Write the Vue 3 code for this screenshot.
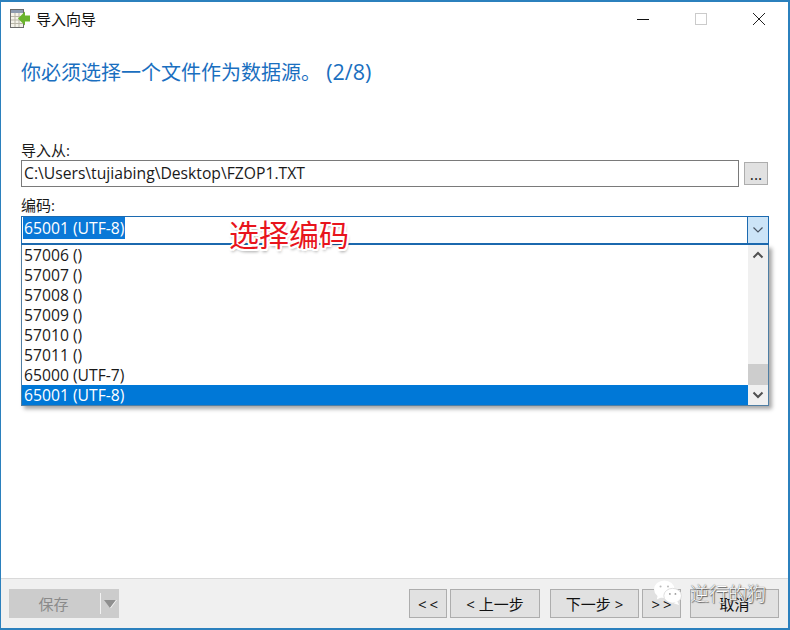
<script setup>
const items = ['57006 ()', '57007 ()', '57008 ()', '57009 ()', '57010 ()', '57011 ()', '65000 (UTF-7)', '65001 (UTF-8)']
</script>

<template>
  <div class="win">
    <header class="titlebar">
      <svg class="appicon" width="21" height="20" viewBox="0 0 21 20">
        <rect x="0.5" y="0.5" width="13" height="18" fill="#f4f2ea" stroke="#6b6b6b" />
        <rect x="1" y="1" width="12" height="3" fill="#8d9bb0" />
        <path d="M1 7.5h12M1 11h12M1 14.5h12M5 4v14M9 4v14" stroke="#b9b6a8" fill="none" />
        <path d="M20 6.5h-5V2.5L8 9.5l7 7v-4h5z" fill="#6ab42d" />
      </svg>
      <span class="wintitle">导入向导</span>
      <div class="controls">
        <svg class="ctl" width="14" height="14" viewBox="0 0 14 14"><path d="M1 7.500h12" stroke="#111" /></svg>
        <svg class="ctl" width="14" height="14" viewBox="0 0 14 14"><rect x="1.5" y="1.5" width="11" height="11" fill="none" stroke="#cbcbcb" /></svg>
        <svg class="ctl" width="14" height="14" viewBox="0 0 14 14"><path d="M1 1l12 12M13 1L1 13" stroke="#222" fill="none" /></svg>
      </div>
    </header>

    <main class="body">
      <h1 class="heading">你必须选择一个文件作为数据源。 <span class="step">(2/8)</span></h1>

      <label class="label first">导入从:</label>
      <div class="filerow">
        <div class="input">C:\Users\tujiabing\Desktop\FZOP1.TXT</div>
        <button class="browse">...</button>
      </div>

      <label class="label second">编码:</label>
      <div class="combo">
        <div class="combotext"><span class="sel">65001 (UTF-8)</span></div>
        <div class="comboarrow">
          <svg width="12" height="8" viewBox="0 0 12 8"><path d="M1.5 1.5L6 6l4.500-4.500" fill="none" stroke="#4a5563" stroke-width="1.200" /></svg>
        </div>
        <div class="note">选择编码</div>
        <div class="dropdown">
          <ul class="list">
            <li v-for="(it, i) in items" :key="it" :class="{ active: i === items.length - 1 }">{{ it }}</li>
          </ul>
          <div class="scroll">
            <div class="sbtn">
              <svg width="12" height="8" viewBox="0 0 12 8"><path d="M1.500 6.500L6 2l4.500 4.500" fill="none" stroke="#505050" stroke-width="2" /></svg>
            </div>
            <div class="track"><div class="thumb"></div></div>
            <div class="sbtn">
              <svg width="12" height="8" viewBox="0 0 12 8"><path d="M1.500 1.500L6 6l4.500-4.500" fill="none" stroke="#505050" stroke-width="2" /></svg>
            </div>
          </div>
        </div>
      </div>
    </main>

    <footer class="footer">
      <div class="savebtn">
        <span class="savetext">保存</span>
        <span class="savearrow"><svg width="14" height="8" viewBox="0 0 14 8"><path d="M1 0h12L7 8z" fill="#8f8f8f" /><path d="M13 0h1L8 8H7z" fill="#f4f4f4" /></svg></span>
      </div>
      <div class="nav">
        <button class="btn w38 spaced">&lt;&lt;</button>
        <button class="btn w90 gap3">&lt; 上一步</button>
        <button class="btn w89 gap10">下一步 &gt;</button>
        <button class="btn w39 gap3 spaced">&gt;&gt;</button>
        <button class="btn w89 gap9">取消</button>
      </div>
      <div class="mark">
        <svg width="32" height="26" viewBox="0 0 32 28">
          <ellipse cx="12" cy="10" rx="11" ry="9.500" fill="#fff" />
          <path d="M5 16l-1 5 6-3z" fill="#fff" />
          <ellipse cx="21" cy="17" rx="9.500" ry="8" fill="#fff" stroke="#dcdcdc" />
          <path d="M26 23l2 4-6-2z" fill="#fff" />
          <circle cx="8" cy="7" r="1.100" fill="#bbb" /><circle cx="16" cy="7" r="1.100" fill="#bbb" />
          <circle cx="18" cy="15" r="1" fill="#999" /><circle cx="24" cy="15" r="1" fill="#999" />
        </svg>
        <span class="marktext">逆行的狗</span>
      </div>
    </footer>
  </div>
</template>

<style scoped>
.win {
  width: 790px;
  height: 630px;
  box-sizing: border-box;
  display: flex;
  flex-direction: column;
  background: #fff;
  border: 2px solid #2b80bd;
  border-width: 2px 2px 2px 1px;
  font-family: "Open Sans", "Noto Sans CJK SC", sans-serif;
  font-size: 15.700px;
  color: #1a1a1a;
  position: relative;
  overflow: hidden;
}
.titlebar {
  height: 33px;
  display: flex;
  align-items: center;
  padding-left: 9px;
  flex: none;
}
.appicon { margin-right: 5px; }
.wintitle { font-size: 15px; color: #111; }
.controls {
  margin-left: auto;
  display: flex;
  gap: 44px;
  padding-right: 22px;
}
.body {
  flex: 1;
  padding: 0 19px 0 20px;
  display: flex;
  flex-direction: column;
}
.heading {
  margin: 23px 0 0;
  font-size: 20px;
  line-height: 28px;
  font-weight: 400;
  color: #1a6fc0;
  white-space: pre;
}
.step { font-size: 21.500px; }
.label { display: block; line-height: 20px; font-size: 15px; }
.first { margin-top: 53px; }
.second { margin: 8px 0 1px; }
.filerow { display: flex; align-items: center; gap: 5px; }
.input {
  flex: 1;
  height: 27px;
  box-sizing: border-box;
  border: 1px solid #7a7a7a;
  line-height: 24px;
  padding: 0 0 0 2px;
  white-space: nowrap;
}
.browse {
  width: 24px;
  height: 23px;
  margin-right: 1px;
  padding: 0;
  border: 1px solid #adadad;
  background: #e1e1e1;
  font: inherit;
  line-height: 22px;
  color: #222;
}
.combo {
  position: relative;
  height: 29px;
  box-sizing: border-box;
  display: flex;
  border: 1px solid #1c6ab0;
  border-bottom-width: 2px;
}
.combotext { flex: 1; padding: 0 0 0 1px; line-height: 22px; }
.sel { display: inline-block; background: #0a78d7; color: #fff; height: 22px; line-height: 22px; padding: 0 1px; }
.comboarrow {
  width: 20px;
  border-left: 1px solid #1c6ab0;
  background: #cce4f7;
  display: flex;
  align-items: center;
  justify-content: center;
}
.note {
  position: absolute;
  left: 207px;
  top: -1px;
  font-family: "Noto Sans CJK SC", sans-serif;
  font-size: 30px;
  font-weight: 400;
  line-height: 34px;
  color: #e8141c;
  text-shadow: -2px 0 #fff, 2px 0 #fff, 0 -2px #fff, 0 2px #fff, -1.500px -1.500px #fff, 1.500px 1.500px #fff, -1.500px 1.500px #fff, 1.500px -1.500px #fff, 1px 3px 3px rgba(0, 0, 0, 0.4);
  z-index: 3;
}
.dropdown {
  position: absolute;
  left: -1px;
  right: -1px;
  top: 28px;
  height: 161px;
  box-sizing: border-box;
  border: 1px solid #4f7ea3;
  border-top: none;
  background: #fff;
  display: flex;
  box-shadow: 3px 3px 4px rgba(0, 0, 0, 0.35);
  z-index: 2;
}
.list { flex: 1; margin: 0; padding: 0; list-style: none; }
.list li { height: 20px; line-height: 21px; padding-left: 2px; }
.list li.active { background: #0078d7; color: #fff; }
.scroll {
  width: 20px;
  background: #f0f0f0;
  display: flex;
  flex-direction: column;
}
.sbtn { height: 20px; display: flex; align-items: center; justify-content: center; flex: none; }
.track { flex: 1; display: flex; flex-direction: column; justify-content: flex-end; }
.thumb { height: 21px; background: #cdcdcd; }
.footer {
  height: 50px;
  flex: none;
  box-sizing: border-box;
  background: #f0f0f0;
  border-top: 1px solid #d9d9d9;
  display: flex;
  align-items: flex-start;
  padding: 10px 9px 0 8px;
  position: relative;
}
.savebtn {
  width: 110px;
  height: 29px;
  background: #cccccc;
  display: flex;
  align-items: center;
  color: #8a8a8a;
}
.savetext { flex: 1; text-align: center; font-size: 15px; padding-right: 2px; }
.savearrow {
  width: 18px;
  height: 21px;
  border-left: 1px solid #f2f2f2;
  display: flex;
  align-items: center;
  justify-content: center;
}
.nav { margin-left: auto; display: flex; }
.btn {
  height: 29px;
  padding: 0;
  box-sizing: border-box;
  border: 1px solid #adadad;
  background: #e1e1e1;
  font: inherit;
  font-size: 15px;
  color: #111;
}
.spaced { letter-spacing: 3px; padding-left: 3px; }
.w38 { width: 38px; }
.w90 { width: 90px; }
.w89 { width: 89px; }
.w39 { width: 39px; }
.gap3 { margin-left: 3px; }
.gap10 { margin-left: 10px; }
.gap9 { margin-left: 9px; }
.mark {
  position: absolute;
  left: 651px;
  top: 0;
  display: flex;
  align-items: center;
  gap: 6px;
}
.marktext {
  font-family: "Noto Sans CJK SC", sans-serif;
  font-size: 19px;
  font-weight: 300;
  color: #fff;
  text-shadow: 0 0 1px #333, 1px 1px 1px #666;
}
</style>
